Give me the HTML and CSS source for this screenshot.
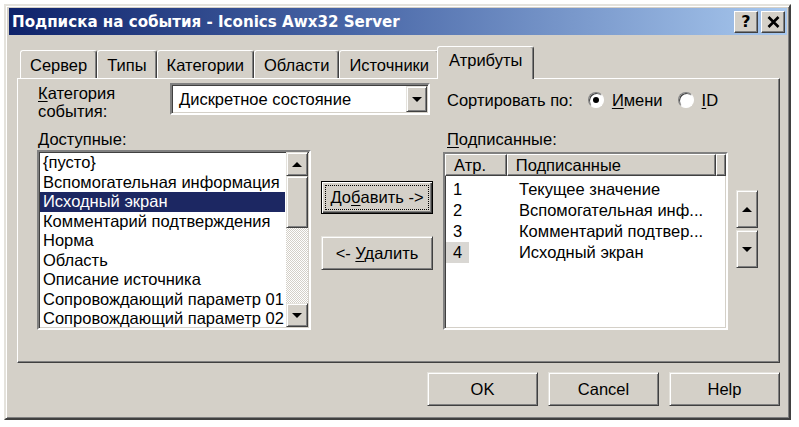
FILE: index.html
```html
<!DOCTYPE html>
<html lang="ru">
<head>
    <meta charset="UTF-8">
    <title>Подписка на события - Iconics Awx32 Server</title>
    <link rel="stylesheet" href="styles.css">
</head>
<body>
<!--Dialog window-->
<div class="window">
    <div class="titlebar">
        <span class="title">Подписка на события - Iconics Awx32 Server</span>
        <div class="caption-buttons">
            <span class="cap-btn help">?</span>
            <span class="cap-btn">
                <svg width="13" height="12" viewBox="0 0 13 12"><path d="M1.5 1 L11.5 11 M11.5 1 L1.5 11" stroke="#000" stroke-width="2.6"/></svg>
            </span>
        </div>
    </div>

    <!--Tabs-->
    <div class="tabs">
        <span class="tab">Сервер</span>
        <span class="tab">Типы</span>
        <span class="tab">Категории</span>
        <span class="tab">Области</span>
        <span class="tab">Источники</span>
        <span class="tab active">Атрибуты</span>
    </div>

    <div class="panel">
        <div class="panel-grid">
            <div class="cat-label"><u>К</u>атегория<br>события:</div>
            <div class="combo">
                <span class="combo-text">Дискретное состояние</span>
                <span class="combo-btn"><i class="tri-down"></i></span>
            </div>
            <div class="sort">
                <span>Сортировать по:</span>
                <span class="radio checked"></span>
                <span class="radio-label"><u>И</u>мени</span>
                <span class="radio"></span>
                <span class="radio-label"><u>I</u>D</span>
            </div>

            <div class="lbl-avail"><u>Д</u>оступные:</div>
            <div class="lbl-subs"><u>П</u>одписанные:</div>

            <!--Available list-->
            <div class="listbox">
                <div class="items">
                    <div class="item">{пусто}</div>
                    <div class="item">Вспомогательная информация</div>
                    <div class="item selected">Исходный экран</div>
                    <div class="item">Комментарий подтверждения</div>
                    <div class="item">Норма</div>
                    <div class="item">Область</div>
                    <div class="item">Описание источника</div>
                    <div class="item">Сопровождающий параметр 01</div>
                    <div class="item">Сопровождающий параметр 02</div>
                </div>
                <div class="scrollbar">
                    <span class="sb-btn up"><i class="tri-up"></i></span>
                    <span class="sb-thumb"></span>
                    <span class="sb-track"></span>
                    <span class="sb-btn down"><i class="tri-down"></i></span>
                </div>
            </div>

            <div class="move-buttons">
                <span class="btn default"><span class="focus">До<u>б</u>авить -&gt;</span></span>
                <span class="btn"><span>&lt;-&nbsp;<u>У</u>далить</span></span>
            </div>

            <!--Subscribed list-->
            <div class="listview">
                <div class="lv-header">
                    <span class="lv-col c1">Атр.</span>
                    <span class="lv-col c2">Подписанные</span>
                    <span class="lv-col c3"></span>
                </div>
                <div class="lv-body">
                    <div class="lv-row"><span class="c1"><span class="num">1</span></span><span class="c2">Текущее значение</span></div>
                    <div class="lv-row"><span class="c1"><span class="num">2</span></span><span class="c2">Вспомогательная инф...</span></div>
                    <div class="lv-row"><span class="c1"><span class="num">3</span></span><span class="c2">Комментарий подтвер...</span></div>
                    <div class="lv-row"><span class="c1"><span class="num marked">4</span></span><span class="c2">Исходный экран</span></div>
                </div>
            </div>

            <div class="updown">
                <span class="btn small"><i class="tri-up"></i></span>
                <span class="btn small"><i class="tri-down"></i></span>
            </div>
        </div>
    </div>

    <!--Dialog buttons-->
    <div class="dialog-buttons">
        <span class="btn wide">OK</span>
        <span class="btn wide">Cancel</span>
        <span class="btn wide">Help</span>
    </div>
</div>
</body>
</html>
```

FILE: styles.css
```css
body {
    margin: 0;
    background: #fff;
    font-family: "Liberation Sans", Arial, sans-serif;
    font-size: 16.5px;
    color: #000;
}
u {
    text-decoration: underline;
    text-underline-offset: 2px;
}
.window {
    box-sizing: border-box;
    width: 787px;
    height: 416px;
    margin: 4px 0 0 4px;
    padding: 2px 2px 2px 3px;
    background: #d4d0c8;
    border: 2px solid;
    border-color: #e4e2dc #404040 #404040 #e4e2dc;
    box-shadow: inset 1px 1px #fff, inset -1px -1px #808080;
}
.titlebar {
    display: flex;
    align-items: center;
    justify-content: space-between;
    height: 27px;
    padding: 0 2px 0 3px;
    background: linear-gradient(90deg, #0e226a, #4a68a8 45%, #a8c8ee);
}
.title {
    color: #fff;
    font-family: "DejaVu Sans", Verdana, sans-serif;
    font-weight: bold;
    font-size: 15.1px;
}
.caption-buttons {
    display: flex;
    gap: 3px;
}
.cap-btn {
    box-sizing: border-box;
    display: flex;
    align-items: center;
    justify-content: center;
    width: 24px;
    height: 22px;
    background: #d4d0c8;
    border: 1px solid;
    border-color: #fff #404040 #404040 #fff;
    box-shadow: inset -1px -1px #808080;
}
.cap-btn.help {
    font-family: "DejaVu Sans", sans-serif;
    font-weight: bold;
    font-size: 16px;
}

/* tabs */
.tabs {
    display: flex;
    align-items: flex-end;
    height: 32px;
    margin: 11px 0 0 8px;
    padding-left: 3px;
}
.tab {
    box-sizing: border-box;
    height: 28px;
    padding: 1px 9px 0 9px;
    line-height: 26px;
    border: 1px solid;
    border-bottom: none;
    border-color: #fff #404040 #404040 #fff;
    border-radius: 3px 3px 0 0;
    box-shadow: inset -1px 0 #808080;
}
.tab.active {
    position: relative;
    z-index: 1;
    height: 33px;
    margin: 0 -2px -1px -2px;
    padding: 0 11px;
    background: #d4d0c8;
}

/* tab page */
.panel {
    box-sizing: border-box;
    height: 285px;
    margin: 0 7px 0 8px;
    padding: 4px 0 0 19px;
    border: 1px solid;
    border-color: #fff #404040 #404040 #fff;
    box-shadow: inset -1px -1px #808080;
}
.panel-grid {
    display: grid;
    grid-template-columns: 133px 141px 10px 112px 10px 285px 8px 22px;
    grid-template-rows: 32px 35px 180px;
}
.cat-label {
    grid-column: 1;
    grid-row: 1;
    line-height: 18px;
    padding-top: 1px;
    margin-left: 1px;
}
.combo {
    grid-column: 2 / 5;
    grid-row: 1;
    box-sizing: border-box;
    width: 260px;
    display: flex;
    align-items: center;
    background: #fff;
    border: 2px solid;
    border-color: #808080 #fff #fff #808080;
    box-shadow: inset 1px 1px #404040, inset -1px -1px #d4d0c8;
}
.combo-text {
    flex: 1;
    padding-left: 7px;
    padding-top: 1px;
}
.combo-btn {
    box-sizing: border-box;
    display: flex;
    align-items: center;
    justify-content: center;
    width: 21px;
    height: 26px;
    margin-right: 1px;
    background: #d4d0c8;
    border: 1px solid;
    border-color: #e4e2dc #404040 #404040 #e4e2dc;
    box-shadow: inset 1px 1px #fff, inset -1px -1px #808080;
}
.tri-down, .tri-up {
    display: block;
    width: 0;
    height: 0;
    border-left: 5px solid transparent;
    border-right: 5px solid transparent;
}
.tri-down {
    border-top: 5px solid #000;
}
.tri-up {
    border-bottom: 5px solid #000;
}
.sort {
    grid-column: 6 / 9;
    grid-row: 1;
    display: flex;
    align-items: center;
    padding: 2px 0 0 4px;
}
.radio {
    position: relative;
    box-sizing: border-box;
    width: 16px;
    height: 16px;
    margin: 0 8px 0 15px;
    border-radius: 50%;
    background: #fff;
    border: 1px solid;
    border-color: #808080 #fff #fff #808080;
    box-shadow: inset 1px 1px #404040;
}
.radio.checked::after {
    content: "";
    position: absolute;
    left: 4px;
    top: 4px;
    width: 6px;
    height: 6px;
    border-radius: 50%;
    background: #000;
}
.lbl-avail, .lbl-subs {
    grid-row: 2;
    align-self: end;
    line-height: 20px;
    padding-bottom: 1px;
}
.lbl-avail {
    grid-column: 1 / 3;
    margin-left: 1px;
}
.lbl-subs {
    grid-column: 6 / 9;
    padding-left: 4px;
}

/* available list */
.listbox {
    grid-column: 1 / 3;
    grid-row: 3;
    box-sizing: border-box;
    display: flex;
    background: #fff;
    border: 2px solid;
    border-color: #808080 #fff #fff #808080;
    box-shadow: inset 1px 1px #404040, inset -1px -1px #d4d0c8;
}
.items {
    flex: 1;
    padding: 1px 1px 0 1px;
    overflow: hidden;
}
.item {
    height: 19.5px;
    line-height: 19.5px;
    padding-left: 3px;
    white-space: nowrap;
}
.item.selected {
    background: #1c2762;
    color: #fff;
}
.scrollbar {
    display: flex;
    flex-direction: column;
    width: 22px;
    margin: 0 1px 1px 0;
}
.sb-btn, .sb-thumb, .btn {
    box-sizing: border-box;
    background: #d4d0c8;
    border: 1px solid;
    border-color: #e4e2dc #404040 #404040 #e4e2dc;
    box-shadow: inset 1px 1px #fff, inset -1px -1px #808080;
}
.sb-btn {
    display: flex;
    align-items: center;
    justify-content: center;
    height: 24px;
}
.sb-thumb {
    height: 52px;
}
.sb-track {
    flex: 1;
    background: repeating-conic-gradient(#fff 0 25%, #d4d0c8 0 50%) 0 0 / 2px 2px;
}

/* buttons */
.btn {
    display: flex;
    align-items: center;
    justify-content: center;
    height: 34px;
    white-space: nowrap;
}
.btn.default {
    height: 33px;
    padding: 4px;
    border: 1px solid #000;
    box-shadow: inset 1px 1px #fff, inset -1px -1px #404040, inset -2px -2px #808080;
}
.focus {
    flex: 1;
    align-self: stretch;
    display: flex;
    align-items: center;
    justify-content: center;
    outline: 1px dotted #000;
}
.move-buttons {
    grid-column: 4;
    grid-row: 3;
    display: flex;
    flex-direction: column;
    gap: 22px;
    padding-top: 31px;
}

/* subscribed list */
.listview {
    grid-column: 6;
    grid-row: 3;
    box-sizing: border-box;
    height: 178px;
    margin-top: 2px;
    background: #fff;
    border: 2px solid;
    border-color: #808080 #fff #fff #808080;
    box-shadow: inset 1px 1px #404040, inset -1px -1px #d4d0c8;
}
.lv-header {
    display: flex;
    height: 22px;
}
.lv-col {
    box-sizing: border-box;
    line-height: 21px;
    background: #d4d0c8;
    border: 1px solid;
    border-color: #fff #404040 #404040 #fff;
    box-shadow: inset -1px -1px #808080;
    padding-left: 8px;
}
.lv-col.c1 {
    width: 62px;
}
.lv-col.c2 {
    width: 210px;
}
.lv-col.c3 {
    width: 10px;
}
.lv-body {
    padding-top: 3px;
}
.lv-row {
    display: flex;
    height: 21px;
    line-height: 21px;
}
.lv-row .c1 {
    width: 62px;
    padding-left: 1px;
}
.lv-row .c2 {
    padding-left: 11px;
    white-space: nowrap;
}
.num {
    display: inline-block;
    padding: 0 7px;
}
.num.marked {
    background: #d9d7d3;
}
.updown {
    grid-column: 8;
    grid-row: 3;
    display: flex;
    flex-direction: column;
    gap: 2px;
    padding-top: 40px;
}
.btn.small {
    height: 38px;
}

/* bottom buttons */
.dialog-buttons {
    display: flex;
    justify-content: flex-end;
    gap: 10px;
    margin-top: 9px;
    padding-right: 7px;
}
.btn.wide {
    width: 111px;
}
```
